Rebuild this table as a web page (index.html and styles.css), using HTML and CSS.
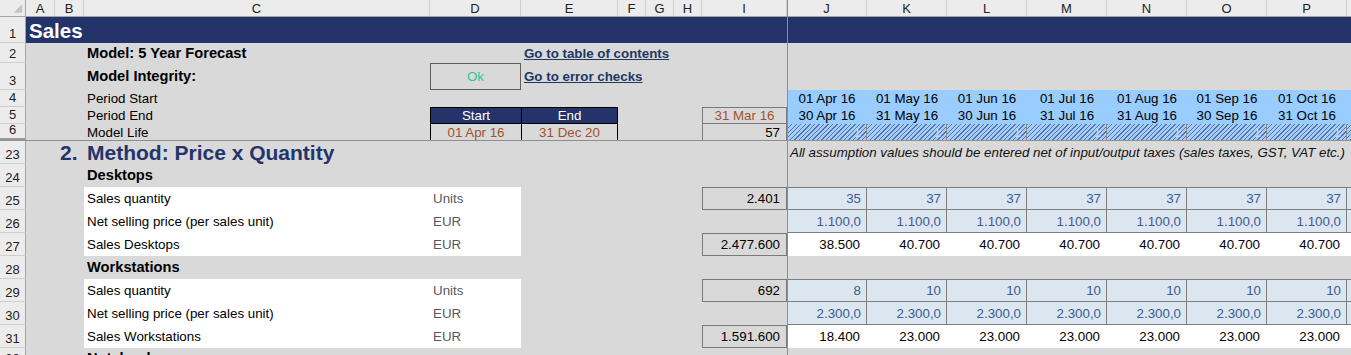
FILE: index.html
```html
<!DOCTYPE html>
<html>
<head>
<meta charset="utf-8">
<title>Sales</title>
<link rel="stylesheet" href="styles.css">
</head>
<body>
<div class="sheet">
  <div class="row hdr">
    <div class="rh corner"><svg width="26" height="16" viewBox="0 0 26 16"><polygon points="23,4 23,13 14,13" fill="#c4c4c4"/></svg></div>
    <div class="ch">A</div><div class="ch">B</div><div class="ch">C</div><div class="ch">D</div><div class="ch">E</div><div class="ch">F</div><div class="ch">G</div><div class="ch">H</div><div class="ch">I</div><div class="ch">J</div><div class="ch">K</div><div class="ch">L</div><div class="ch">M</div><div class="ch">N</div><div class="ch">O</div><div class="ch">P</div><div class="ch"></div>
  </div>

  <div class="row h26 band">
    <div class="rh">1</div>
    <div class="cA title">Sales</div>
  </div>

  <div class="row h20">
    <div class="rh">2</div>
    <div class="cC bold">Model: 5 Year Forecast</div>
    <div class="cE link">Go to table of contents</div>
  </div>

  <div class="row h27">
    <div class="rh">3</div>
    <div class="cC bold">Model Integrity:</div>
    <div class="cD okbox">Ok</div>
    <div class="cE link">Go to error checks</div>
  </div>

  <div class="row h17">
    <div class="rh">4</div>
    <div class="cC">Period Start</div>
    <div class="cJ date">01 Apr 16</div><div class="date">01 May 16</div><div class="date">01 Jun 16</div><div class="date">01 Jul 16</div><div class="date">01 Aug 16</div><div class="date">01 Sep 16</div><div class="date">01 Oct 16</div><div class="date"></div>
  </div>

  <div class="row h17">
    <div class="rh">5</div>
    <div class="cC">Period End</div>
    <div class="cD navycell">Start</div>
    <div class="cE navycell">End</div>
    <div class="cI ibox itop brown center">31 Mar 16</div>
    <div class="cJ date">30 Apr 16</div><div class="date">31 May 16</div><div class="date">30 Jun 16</div><div class="date">31 Jul 16</div><div class="date">31 Aug 16</div><div class="date">30 Sep 16</div><div class="date">31 Oct 16</div><div class="date"></div>
  </div>

  <div class="row h17 freeze">
    <div class="rh rh-freeze">6</div>
    <div class="cC">Model Life</div>
    <div class="cD lifecell brown">01 Apr 16</div>
    <div class="cE lifecell brown">31 Dec 20</div>
    <div class="cI ibox num">57</div>
    <div class="cJ hatch">1</div><div class="hatch">1</div><div class="hatch">1</div><div class="hatch">1</div><div class="hatch">1</div><div class="hatch">1</div><div class="hatch">1</div><div class="hatch"></div>
  </div>

  <div class="row h23">
    <div class="rh">23</div>
    <div class="cB section">2.</div>
    <div class="cC section">Method: Price x Quantity</div>
    <div class="cJ note">All assumption values should be entered net of input/output taxes (sales taxes, GST, VAT etc.)</div>
  </div>

  <div class="row h23">
    <div class="rh">24</div>
    <div class="cC bold">Desktops</div>
  </div>

  <div class="row h23">
    <div class="rh">25</div>
    <div class="cC white">Sales quantity</div>
    <div class="cD white unit">Units</div>
    <div class="cI ibox full num">2.401</div>
    <div class="cJ inp first">35</div><div class="inp first">37</div><div class="inp first">37</div><div class="inp first">37</div><div class="inp first">37</div><div class="inp first">37</div><div class="inp first">37</div><div class="inp first"></div>
  </div>

  <div class="row h23">
    <div class="rh">26</div>
    <div class="cC white">Net selling price (per sales unit)</div>
    <div class="cD white unit">EUR</div>
    <div class="cJ inp">1.100,0</div><div class="inp">1.100,0</div><div class="inp">1.100,0</div><div class="inp">1.100,0</div><div class="inp">1.100,0</div><div class="inp">1.100,0</div><div class="inp">1.100,0</div><div class="inp"></div>
  </div>

  <div class="row h23">
    <div class="rh">27</div>
    <div class="cC white">Sales Desktops</div>
    <div class="cD white unit">EUR</div>
    <div class="cI ibox full num">2.477.600</div>
    <div class="cJ calc">38.500</div><div class="calc">40.700</div><div class="calc">40.700</div><div class="calc">40.700</div><div class="calc">40.700</div><div class="calc">40.700</div><div class="calc">40.700</div><div class="calc"></div>
  </div>

  <div class="row h23">
    <div class="rh">28</div>
    <div class="cC bold">Workstations</div>
  </div>

  <div class="row h23">
    <div class="rh">29</div>
    <div class="cC white">Sales quantity</div>
    <div class="cD white unit">Units</div>
    <div class="cI ibox full num">692</div>
    <div class="cJ inp first">8</div><div class="inp first">10</div><div class="inp first">10</div><div class="inp first">10</div><div class="inp first">10</div><div class="inp first">10</div><div class="inp first">10</div><div class="inp first"></div>
  </div>

  <div class="row h23">
    <div class="rh">30</div>
    <div class="cC white">Net selling price (per sales unit)</div>
    <div class="cD white unit">EUR</div>
    <div class="cJ inp">2.300,0</div><div class="inp">2.300,0</div><div class="inp">2.300,0</div><div class="inp">2.300,0</div><div class="inp">2.300,0</div><div class="inp">2.300,0</div><div class="inp">2.300,0</div><div class="inp"></div>
  </div>

  <div class="row h23">
    <div class="rh">31</div>
    <div class="cC white">Sales Workstations</div>
    <div class="cD white unit">EUR</div>
    <div class="cI ibox full num">1.591.600</div>
    <div class="cJ calc">18.400</div><div class="calc">23.000</div><div class="calc">23.000</div><div class="calc">23.000</div><div class="calc">23.000</div><div class="calc">23.000</div><div class="calc">23.000</div><div class="calc"></div>
  </div>

  <div class="row h20">
    <div class="rh">32</div>
    <div class="cC bold">Notebooks</div>
  </div>

  <div class="freeze-v"></div>
</div>
</body>
</html>
```

FILE: styles.css
```css
* { box-sizing: border-box; margin: 0; padding: 0; }

html, body {
  width: 1351px;
  height: 355px;
  overflow: hidden;
}

body {
  background: #d9d9d9;
  font-family: "Liberation Sans", Arial, sans-serif;
  font-size: 13.33px;
  line-height: 15px;
  color: #000;
}

.sheet {
  position: relative;
  width: 1427px;
}

.row {
  display: grid;
  grid-template-columns: 26px 29px 29px 346px 91px 97px 28px 28px 28px 85px repeat(8, 80px);
  grid-template-rows: 100%;
  background: #d9d9d9;
}

.row > div {
  display: flex;
  align-items: center;
  white-space: nowrap;
  padding: 0 3px;
  min-width: 0;
}

.h17 { height: 17px; }
.h20 { height: 20px; }
.h23 { height: 23px; }
.h26 { height: 26px; }
.h27 { height: 27px; }

.cA { grid-column: 2; }
.cB { grid-column: 3; }
.cC { grid-column: 4; }
.cD { grid-column: 5; }
.cE { grid-column: 6; }
.cI { grid-column: 10; }
.cJ { grid-column: 11; }

/* headers */
.hdr {
  height: 17px;
  background: #ececec;
  border-bottom: 1px solid #a5a5a5;
}

.row > .ch {
  justify-content: center;
  border-right: 1px solid #cfcfcf;
  font-size: 13px;
  color: #222;
  padding: 0;
}

.row > .rh {
  background: #ececec;
  border-right: 1px solid #a5a5a5;
  border-bottom: 1px solid #cfcfcf;
  justify-content: center;
  align-items: flex-end;
  font-size: 13px;
  color: #222;
  padding: 0 0 1px 0;
}

.row > .corner {
  padding: 0;
  border-bottom: none;
  align-items: stretch;
}

.row > .rh-freeze {
  border-bottom: 2px solid #9a9a9a;
}

.freeze {
  border-bottom: 1px solid #8e8e8e;
}

.freeze-v {
  position: absolute;
  left: 787px;
  top: 0;
  width: 1px;
  height: 355px;
  background: #8e8e8e;
}

/* title band */
.band { background: #24346a; }

.title {
  color: #fff;
  font-weight: bold;
  font-size: 20.5px;
  padding-left: 4px;
}

.bold {
  font-weight: bold;
  font-size: 14.67px;
}

.link {
  font-weight: bold;
  color: #1f3763;
  text-decoration: underline;
}

.row > .okbox {
  justify-content: center;
  border: 1px solid #5e5e5e;
  color: #2fc892;
}

.row > .date {
  background: #99ccff;
  justify-content: center;
}

.row > .navycell {
  background: #24346a;
  color: #fff;
  justify-content: center;
  border: 1px solid #000;
  border-right: none;
}

.row > .navycell.cE {
  border-right: 1px solid #000;
}

.row > .lifecell {
  justify-content: center;
  border-left: 1px solid #000;
}

.row > .lifecell.cE {
  border-right: 1px solid #000;
}

.brown { color: #a0522d; }

.row > .ibox {
  border-left: 1px solid #7a7a7a;
  border-right: 1px solid #7a7a7a;
}

.row > .itop {
  border-top: 1px solid #7a7a7a;
  border-bottom: 1px solid #7a7a7a;
}

.row > .full {
  border: 1px solid #7a7a7a;
}

.row > .center { justify-content: center; }

.row > .num {
  justify-content: flex-end;
  padding-right: 6px;
}

.row > .hatch {
  background: repeating-linear-gradient(135deg, #4f76b8 0 1px, #a8cdf4 1px 3.2px);
  border-right: 1px solid #8a8a8a;
  justify-content: flex-end;
  padding-right: 5px;
  color: #c9d6e6;
}

.section {
  color: #24346a;
  font-weight: bold;
  font-size: 21px;
}

.row > .cB.section { padding-left: 5px; }

.note {
  font-style: italic;
  color: #111;
}

.row > .white { background: #fff; }

.unit { color: #595959; }

.row > .inp {
  background: #dce6f1;
  border-right: 1px solid #7f7f7f;
  border-bottom: 1px solid #7f7f7f;
  justify-content: flex-end;
  padding-right: 5px;
  color: #3e5c92;
}

.row > .inp.first {
  border-top: 1px solid #7f7f7f;
}

.row > .calc {
  background: #fff;
  justify-content: flex-end;
  padding-right: 7px;
}
```
